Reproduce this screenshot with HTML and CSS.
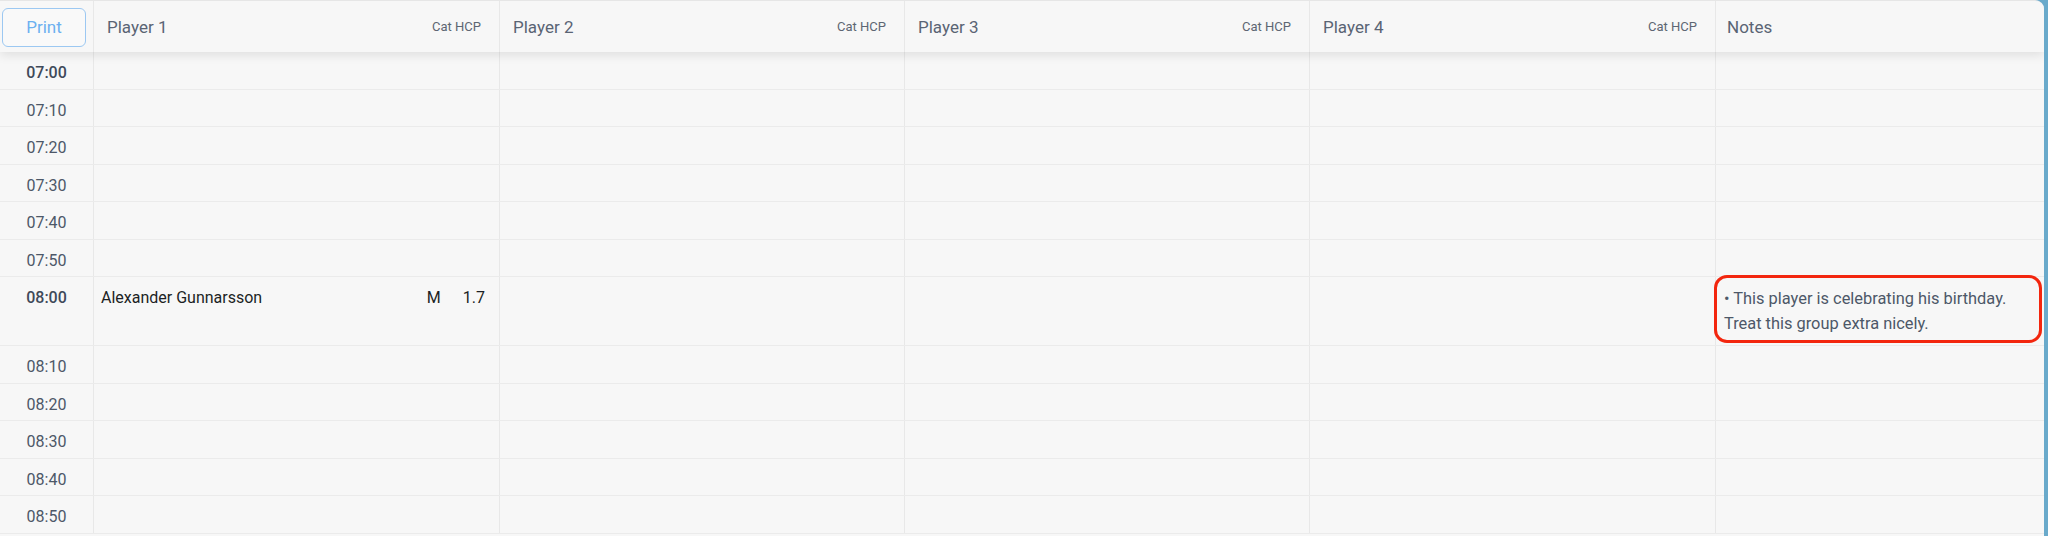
FILE: index.html
```html
<!DOCTYPE html>
<html lang="en">
  <head>
    <meta charset="UTF-8" />
    <meta name="viewport" content="width=device-width, initial-scale=1.0" />
    <title>Tee Sheet</title>
    <link rel="stylesheet" href="styles.css">
  </head>
  <body>
    <div class="sheet">
      <div class="row head">
        <div class="cell time-head"><button class="print-btn">Print</button></div>
        <div class="cell player-head"><span>Player 1</span><span class="sub">Cat HCP</span></div>
        <div class="cell player-head"><span>Player 2</span><span class="sub">Cat HCP</span></div>
        <div class="cell player-head"><span>Player 3</span><span class="sub">Cat HCP</span></div>
        <div class="cell player-head"><span>Player 4</span><span class="sub">Cat HCP</span></div>
        <div class="cell notes-head">Notes</div>
      </div>

      <div class="row"><div class="cell time bold">07:00</div><div class="cell"></div><div class="cell"></div><div class="cell"></div><div class="cell"></div><div class="cell"></div></div>
      <div class="row"><div class="cell time">07:10</div><div class="cell"></div><div class="cell"></div><div class="cell"></div><div class="cell"></div><div class="cell"></div></div>
      <div class="row"><div class="cell time">07:20</div><div class="cell"></div><div class="cell"></div><div class="cell"></div><div class="cell"></div><div class="cell"></div></div>
      <div class="row"><div class="cell time">07:30</div><div class="cell"></div><div class="cell"></div><div class="cell"></div><div class="cell"></div><div class="cell"></div></div>
      <div class="row"><div class="cell time">07:40</div><div class="cell"></div><div class="cell"></div><div class="cell"></div><div class="cell"></div><div class="cell"></div></div>
      <div class="row"><div class="cell time">07:50</div><div class="cell"></div><div class="cell"></div><div class="cell"></div><div class="cell"></div><div class="cell"></div></div>

      <!-- booked slot -->
      <div class="row tall">
        <div class="cell time bold">08:00</div>
        <div class="cell player">
          <span class="name">Alexander Gunnarsson</span>
          <span class="cat">M</span>
          <span class="hcp">1.7</span>
        </div>
        <div class="cell"></div>
        <div class="cell"></div>
        <div class="cell"></div>
        <div class="cell note">
          <div class="note-text">• This player is celebrating his birthday.<br>Treat this group extra nicely.</div>
          <div class="highlight"></div>
        </div>
      </div>

      <div class="row"><div class="cell time">08:10</div><div class="cell"></div><div class="cell"></div><div class="cell"></div><div class="cell"></div><div class="cell"></div></div>
      <div class="row"><div class="cell time">08:20</div><div class="cell"></div><div class="cell"></div><div class="cell"></div><div class="cell"></div><div class="cell"></div></div>
      <div class="row"><div class="cell time">08:30</div><div class="cell"></div><div class="cell"></div><div class="cell"></div><div class="cell"></div><div class="cell"></div></div>
      <div class="row"><div class="cell time">08:40</div><div class="cell"></div><div class="cell"></div><div class="cell"></div><div class="cell"></div><div class="cell"></div></div>
      <div class="row"><div class="cell time">08:50</div><div class="cell"></div><div class="cell"></div><div class="cell"></div><div class="cell"></div><div class="cell"></div></div>
    </div>
  </body>
</html>
```

FILE: styles.css
```css
body {
  margin: 0;
  background: #6aaacb;
  font-family: Roboto, "Liberation Sans", sans-serif;
  overflow: hidden;
}

.sheet {
  width: 2044px;
  height: 536px;
  background: #f7f7f7;
  border-top: 1px solid #e6e6e6;
  border-top-right-radius: 9px;
  overflow: hidden;
  box-sizing: border-box;
}

.row {
  display: grid;
  grid-template-columns: 94px 406px 405px 405px 406px 1fr;
  height: 37.5px;
  box-sizing: border-box;
  border-bottom: 1px solid #ebebeb;
}

.row.head {
  height: 51px;
  border-bottom: none;
  position: relative;
  z-index: 1;
  background: #f7f7f7;
  box-shadow: 0 3px 10px rgba(0, 0, 0, 0.1);
}

.row.tall {
  height: 69px;
}

.cell {
  border-right: 1px solid #e8e8e8;
  box-sizing: border-box;
  min-width: 0;
}

.cell:last-child {
  border-right: none;
}

.time-head {
  display: flex;
  align-items: center;
  padding-left: 2px;
}

.print-btn {
  width: 84px;
  height: 39px;
  margin-top: 1px;
  background: #f9f9f9;
  border: 1px solid #9cc8f2;
  border-radius: 6px;
  color: #6cb0f0;
  font-family: Roboto, "Liberation Sans", sans-serif;
  font-size: 17px;
  cursor: pointer;
}

.player-head {
  display: flex;
  align-items: center;
  justify-content: space-between;
  padding: 0 18px 0 13px;
  color: #5a6474;
  font-size: 17px;
}

.player-head .sub {
  font-size: 13px;
  color: #5d6673;
}

.notes-head {
  display: flex;
  align-items: center;
  padding-left: 11px;
  color: #5a6474;
  font-size: 17px;
}

.time {
  text-align: center;
  color: #4d5868;
  font-size: 16px;
  line-height: 20px;
  padding-top: 11px;
}

.time.bold {
  font-weight: 500;
  color: #3f4a5a;
}

.player {
  display: flex;
  align-items: flex-start;
  padding: 11px 14px 0 7px;
  font-size: 16px;
  line-height: 20px;
  color: #1c1f24;
}

.player .name {
  flex: 1;
}

.player .cat {
  width: 36px;
}

.note {
  position: relative;
}

.note-text {
  padding: 9px 0 0 8px;
  font-size: 16.4px;
  line-height: 25px;
  color: #4d5868;
}

.highlight {
  position: absolute;
  left: -2px;
  top: -2px;
  right: 2px;
  bottom: 2px;
  border: 3px solid #f3260e;
  border-radius: 13px;
  pointer-events: none;
}
```
